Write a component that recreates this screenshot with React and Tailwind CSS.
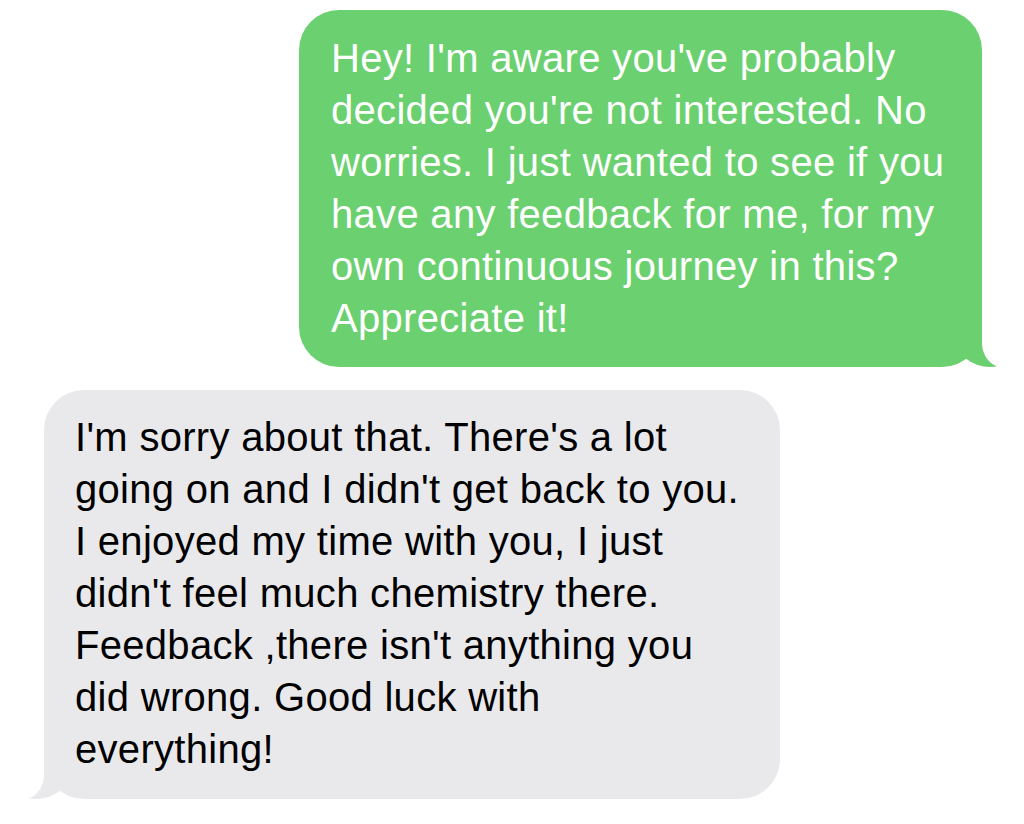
import React from 'react';

const sent = [
  "Hey! I'm aware you've probably",
  "decided you're not interested. No",
  'worries. I just wanted to see if you',
  'have any feedback for me, for my',
  'own continuous journey in this?',
  'Appreciate it!',
];

const received = [
  "I'm sorry about that. There's a lot",
  "going on and I didn't get back to you.",
  'I enjoyed my time with you, I just',
  "didn't feel much chemistry there.",
  "Feedback ,there isn't anything you",
  'did wrong. Good luck with',
  'everything!',
];

function App() {
  return (
    <div
      className="h-[824px] w-[1024px] overflow-hidden bg-white"
      style={{ fontFamily: '"Liberation Sans", Arial, sans-serif' }}>
      <div className="flex justify-end pr-[42px] pt-[10px]">
        <div className="relative w-[683px] rounded-[40px] bg-[#6bd06f] pb-[23px] pl-[32px] pt-[22px] text-[40px] leading-[52px] tracking-[0.3px] text-white">
          {sent.map((line) => (
            <div key={line} className="whitespace-nowrap">
              {line}
            </div>
          ))}
          <svg className="absolute bottom-0 right-[-16px]" width="50" height="42" viewBox="0 0 50 42">
            <path d="M 18 2 L 34 2 L 34 20 Q 36 36 49 41.5 Q 31 44 17 33 Z" fill="#6bd06f" />
          </svg>
        </div>
      </div>
      <div className="pl-[44px] pt-[23px]">
        <div className="relative w-[736px] rounded-[40px] bg-[#e9e9eb] pb-[24px] pl-[31px] pt-[21px] text-[40px] leading-[52px] tracking-[0.3px] text-black">
          {received.map((line) => (
            <div key={line} className="whitespace-nowrap">
              {line}
            </div>
          ))}
          <svg className="absolute bottom-0 left-[-16px]" width="50" height="42" viewBox="0 0 50 42">
            <path d="M 32 2 L 16 2 L 16 20 Q 14 36 1 41.5 Q 19 44 33 33 Z" fill="#e9e9eb" />
          </svg>
        </div>
      </div>
    </div>
  );
}

export default App;
